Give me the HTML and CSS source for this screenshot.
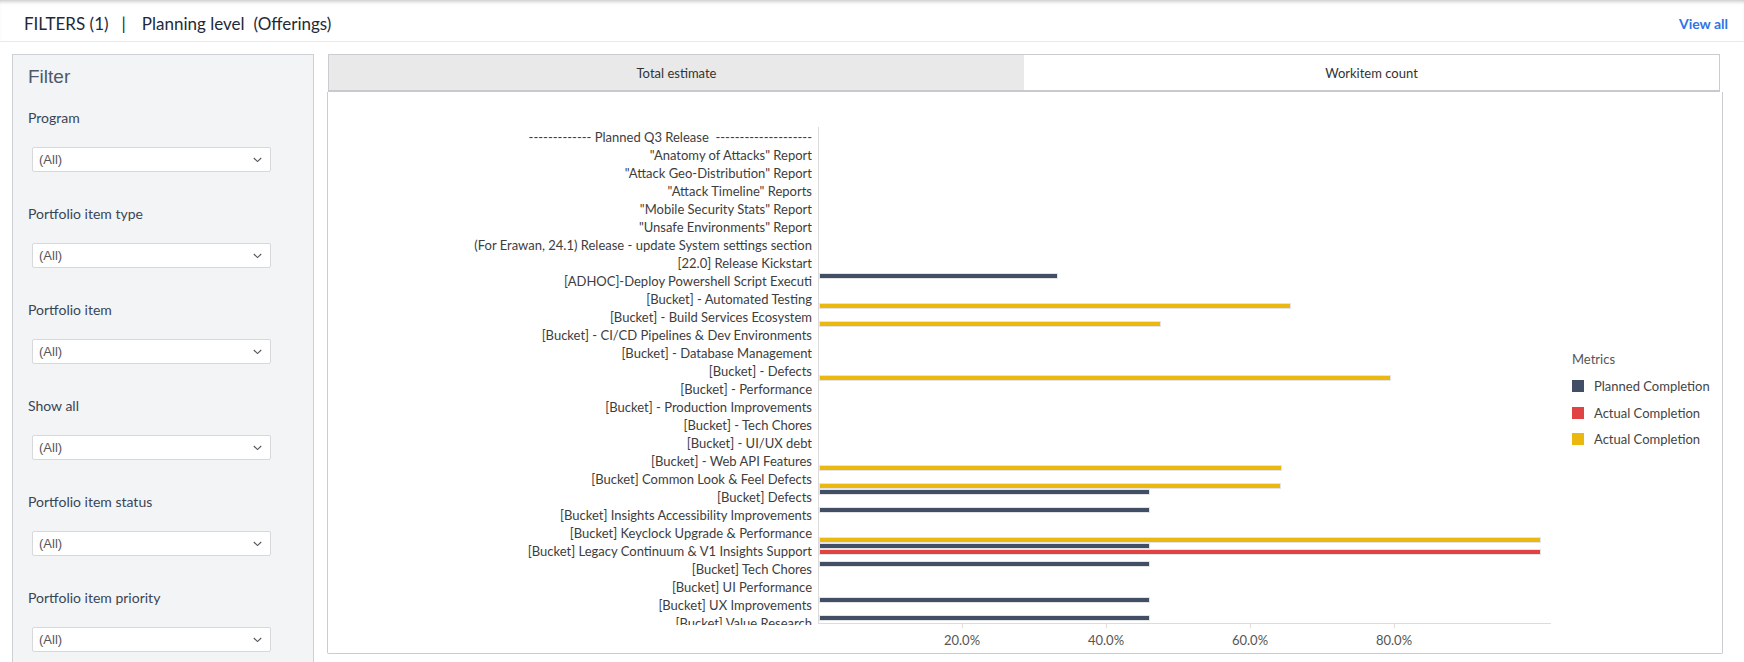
FILE: index.html
```html
<!DOCTYPE html>
<html>
<head>
<meta charset="utf-8">
<title>Filters</title>
<link rel="stylesheet" href="styles.css">
</head>
<body>
<header class="topbar">
  <div class="crumbs">
    <span class="crumb">FILTERS (1)</span>
    <span class="sep">|</span>
    <span class="crumb">Planning level</span>
    <span class="crumb crumb-sub">(Offerings)</span>
  </div>
  <a class="view-all">View all</a>
</header>
<main class="content">
  <aside class="filter-panel">
    <h2 class="filter-title">Filter</h2>
    <div class="field">
      <div class="field-label">Program</div>
      <div class="select"><span>(All)</span><svg class="chev" width="9" height="6" viewBox="0 0 9 6"><polyline points="0.8,1 4.5,4.6 8.2,1" fill="none" stroke="#555" stroke-width="1.1"/></svg></div>
    </div>
    <div class="field">
      <div class="field-label">Portfolio item type</div>
      <div class="select"><span>(All)</span><svg class="chev" width="9" height="6" viewBox="0 0 9 6"><polyline points="0.8,1 4.5,4.6 8.2,1" fill="none" stroke="#555" stroke-width="1.1"/></svg></div>
    </div>
    <div class="field">
      <div class="field-label">Portfolio item</div>
      <div class="select"><span>(All)</span><svg class="chev" width="9" height="6" viewBox="0 0 9 6"><polyline points="0.8,1 4.5,4.6 8.2,1" fill="none" stroke="#555" stroke-width="1.1"/></svg></div>
    </div>
    <div class="field">
      <div class="field-label">Show all</div>
      <div class="select"><span>(All)</span><svg class="chev" width="9" height="6" viewBox="0 0 9 6"><polyline points="0.8,1 4.5,4.6 8.2,1" fill="none" stroke="#555" stroke-width="1.1"/></svg></div>
    </div>
    <div class="field">
      <div class="field-label">Portfolio item status</div>
      <div class="select"><span>(All)</span><svg class="chev" width="9" height="6" viewBox="0 0 9 6"><polyline points="0.8,1 4.5,4.6 8.2,1" fill="none" stroke="#555" stroke-width="1.1"/></svg></div>
    </div>
    <div class="field">
      <div class="field-label">Portfolio item priority</div>
      <div class="select"><span>(All)</span><svg class="chev" width="9" height="6" viewBox="0 0 9 6"><polyline points="0.8,1 4.5,4.6 8.2,1" fill="none" stroke="#555" stroke-width="1.1"/></svg></div>
    </div>
  </aside>
  <section class="chart-col">
    <div class="tabs">
      <div class="tab active">Total estimate</div>
      <div class="tab">Workitem count</div>
    </div>
    <div class="chart-panel">
      <div class="chart">
        <div class="labels">
          <div class="lbl">------------- Planned Q3 Release &nbsp;--------------------</div>
          <div class="lbl">"Anatomy of Attacks" Report</div>
          <div class="lbl">"Attack Geo-Distribution" Report</div>
          <div class="lbl">"Attack Timeline" Reports</div>
          <div class="lbl">"Mobile Security Stats" Report</div>
          <div class="lbl">"Unsafe Environments" Report</div>
          <div class="lbl">(For Erawan, 24.1) Release - update System settings section</div>
          <div class="lbl">[22.0] Release Kickstart</div>
          <div class="lbl">[ADHOC]-Deploy Powershell Script Executi</div>
          <div class="lbl">[Bucket] - Automated Testing</div>
          <div class="lbl">[Bucket] - Build Services Ecosystem</div>
          <div class="lbl">[Bucket] - CI/CD Pipelines &amp; Dev Environments</div>
          <div class="lbl">[Bucket] - Database Management</div>
          <div class="lbl">[Bucket] - Defects</div>
          <div class="lbl">[Bucket] - Performance</div>
          <div class="lbl">[Bucket] - Production Improvements</div>
          <div class="lbl">[Bucket] - Tech Chores</div>
          <div class="lbl">[Bucket] - UI/UX debt</div>
          <div class="lbl">[Bucket] - Web API Features</div>
          <div class="lbl">[Bucket] Common Look &amp; Feel Defects</div>
          <div class="lbl">[Bucket] Defects</div>
          <div class="lbl">[Bucket] Insights Accessibility Improvements</div>
          <div class="lbl">[Bucket] Keyclock Upgrade &amp; Performance</div>
          <div class="lbl">[Bucket] Legacy Continuum &amp; V1 Insights Support</div>
          <div class="lbl">[Bucket] Tech Chores</div>
          <div class="lbl">[Bucket] UI Performance</div>
          <div class="lbl">[Bucket] UX Improvements</div>
          <div class="lbl">[Bucket] Value Research</div>
        </div>
        <div class="plot-wrap">
          <div class="plot">
            <div class="bands">
              <div class="band"><i class="slot"></i><i class="slot"></i><i class="slot"></i></div>
              <div class="band"><i class="slot"></i><i class="slot"></i><i class="slot"></i></div>
              <div class="band"><i class="slot"></i><i class="slot"></i><i class="slot"></i></div>
              <div class="band"><i class="slot"></i><i class="slot"></i><i class="slot"></i></div>
              <div class="band"><i class="slot"></i><i class="slot"></i><i class="slot"></i></div>
              <div class="band"><i class="slot"></i><i class="slot"></i><i class="slot"></i></div>
              <div class="band"><i class="slot"></i><i class="slot"></i><i class="slot"></i></div>
              <div class="band"><i class="slot"></i><i class="slot"></i><i class="slot"></i></div>
              <div class="band"><i class="slot"></i><i class="slot"><b class="bar planned" style="width:237px"></b></i><i class="slot"></i></div>
              <div class="band"><i class="slot"></i><i class="slot"></i><i class="slot"></i></div>
              <div class="band"><i class="slot"><b class="bar actual-y" style="width:470px"></b></i><i class="slot"></i><i class="slot"></i></div>
              <div class="band"><i class="slot"><b class="bar actual-y" style="width:340px"></b></i><i class="slot"></i><i class="slot"></i></div>
              <div class="band"><i class="slot"></i><i class="slot"></i><i class="slot"></i></div>
              <div class="band"><i class="slot"></i><i class="slot"></i><i class="slot"></i></div>
              <div class="band"><i class="slot"><b class="bar actual-y" style="width:570px"></b></i><i class="slot"></i><i class="slot"></i></div>
              <div class="band"><i class="slot"></i><i class="slot"></i><i class="slot"></i></div>
              <div class="band"><i class="slot"></i><i class="slot"></i><i class="slot"></i></div>
              <div class="band"><i class="slot"></i><i class="slot"></i><i class="slot"></i></div>
              <div class="band"><i class="slot"></i><i class="slot"></i><i class="slot"></i></div>
              <div class="band"><i class="slot"><b class="bar actual-y" style="width:461px"></b></i><i class="slot"></i><i class="slot"></i></div>
              <div class="band"><i class="slot"><b class="bar actual-y" style="width:460px"></b></i><i class="slot"><b class="bar planned" style="width:329px"></b></i><i class="slot"></i></div>
              <div class="band"><i class="slot"></i><i class="slot"><b class="bar planned" style="width:329px"></b></i><i class="slot"></i></div>
              <div class="band"><i class="slot"></i><i class="slot"></i><i class="slot"></i></div>
              <div class="band"><i class="slot"><b class="bar actual-y" style="width:720px"></b></i><i class="slot"><b class="bar planned" style="width:329px"></b></i><i class="slot"><b class="bar actual-r" style="width:720px"></b></i></div>
              <div class="band"><i class="slot"></i><i class="slot"><b class="bar planned" style="width:329px"></b></i><i class="slot"></i></div>
              <div class="band"><i class="slot"></i><i class="slot"></i><i class="slot"></i></div>
              <div class="band"><i class="slot"></i><i class="slot"><b class="bar planned" style="width:329px"></b></i><i class="slot"></i></div>
              <div class="band"><i class="slot"></i><i class="slot"><b class="bar planned" style="width:329px"></b></i><i class="slot"></i></div>
            </div>
          </div>
          <div class="xaxis">
            <div class="tick-cell"></div>
            <div class="tick-cell tick">20.0%</div>
            <div class="tick-cell tick">40.0%</div>
            <div class="tick-cell tick">60.0%</div>
            <div class="tick-cell tick">80.0%</div>
          </div>
        </div>
        <div class="legend">
          <div class="legend-title">Metrics</div>
          <div class="legend-item"><span class="swatch planned"></span>Planned Completion</div>
          <div class="legend-item"><span class="swatch actual-r"></span>Actual Completion</div>
          <div class="legend-item"><span class="swatch actual-y"></span>Actual Completion</div>
        </div>
      </div>
    </div>
  </section>
</main>
</body>
</html>
```

FILE: styles.css
```css
* { box-sizing: border-box; }
html, body { margin: 0; padding: 0; overflow: hidden; }
body {
  width: 1744px;
  height: 662px;
  background: #ffffff;
  font-family: Lato, "Noto Sans", sans-serif;
  color: #333333;
}

/* top bar */
.topbar {
  height: 42px;
  border-bottom: 1px solid #e8e9eb;
  display: flex;
  align-items: center;
  justify-content: space-between;
  padding: 5px 16px 0 24px;
  box-shadow: inset 0 4px 4px -3px rgba(0, 0, 0, 0.28);
}
.crumbs {
  display: flex;
  align-items: center;
  font-size: 17px;
  color: #1d2a39;
  white-space: nowrap;
}
.sep { margin: 0 16px 0 13px; }
.crumb-sub { margin-left: 9px; }
.view-all {
  font-size: 14px;
  font-weight: 700;
  color: #2f74e8;
  cursor: pointer;
}

/* main */
.content {
  display: flex;
  align-items: flex-start;
  gap: 13px;
  padding: 12px 21px 0 12px;
}

/* filter panel */
.filter-panel {
  width: 302px;
  height: 640px;
  flex: none;
  background: #f3f4f6;
  border: 1px solid #cdd1d6;
  padding: 11px 15px 0 15px;
}
.filter-title {
  margin: 0 0 20px 0;
  font-family: "Liberation Sans", Arial, sans-serif;
  font-size: 19px;
  font-weight: normal;
  line-height: 22px;
  color: #4e5a69;
}
.field { margin-bottom: 32px; }
.field-label {
  font-size: 14px;
  line-height: 20px;
  color: #3a4555;
  margin-bottom: 19px;
}
.select {
  margin-left: 4px;
  width: 239px;
  height: 25px;
  background: #ffffff;
  border: 1px solid #d6d8db;
  border-radius: 2px;
  display: flex;
  align-items: center;
  justify-content: space-between;
  padding: 0 8px 0 6px;
  font-family: "Liberation Sans", Arial, sans-serif;
  font-size: 13px;
  color: #555555;
}
.chev { display: block; }

/* chart column */
.chart-col {
  width: 1396px;
  flex: none;
}
.tabs {
  display: flex;
  height: 38px;
  margin: 0 3px 0 1px;
  border: 1px solid #c9ccd0;
  border-bottom: 2px solid #c6c9cd;
}
.tab {
  flex: 1;
  display: flex;
  align-items: center;
  justify-content: center;
  font-size: 13px;
  color: #333333;
  background: #ffffff;
}
.tab.active { background: #e9e9e9; }

.chart-panel {
  height: 562px;
  border: 1px solid #c9ccd0;
  border-top: none;
  border-radius: 0 0 2px 2px;
  padding-top: 35px;
}
.chart {
  display: flex;
  align-items: flex-start;
}
.labels {
  width: 484px;
  height: 498px;
  overflow: hidden;
  text-align: right;
  font-size: 13px;
  color: #3d3d3d;
  flex: none;
  padding-top: 0.7px;
}
.lbl {
  height: 18px;
  line-height: 18px;
  white-space: nowrap;
}

.plot-wrap {
  width: 733px;
  margin-left: 6px;
  flex: none;
}
.plot {
  height: 497px;
  border-left: 1px solid #dcdcdc;
  border-bottom: 1px solid #dcdcdc;
  overflow: hidden;
}
.bands { margin-top: -4px; }
.band {
  height: 18px;
  display: flex;
  flex-direction: column;
}
.slot {
  display: flex;
  align-items: center;
  height: 6px;
}
.bar {
  display: block;
  height: 4px;
  margin-left: 1px;
  box-shadow: 0 0 0 1px #e4e4e4;
}
.planned { background: #414e66; }
.actual-r { background: #df4343; }
.actual-y { background: #eab80e; }

.xaxis {
  display: flex;
  margin-left: -72px;
}
.tick-cell {
  width: 144px;
  flex: none;
  position: relative;
  text-align: center;
  font-size: 13px;
  line-height: 16px;
  padding-top: 8px;
  color: #555555;
}
.tick::before {
  content: "";
  position: absolute;
  left: 50%;
  top: 0;
  width: 1px;
  height: 4px;
  background: #dcdcdc;
}

/* legend */
.legend {
  margin-left: 21px;
  padding-top: 219px;
  font-size: 13px;
  color: #444444;
}
.legend-title {
  height: 26.7px;
  line-height: 26.7px;
  color: #555555;
}
.legend-item {
  display: flex;
  align-items: center;
  gap: 10px;
  height: 26.7px;
  white-space: nowrap;
}
.swatch {
  width: 12px;
  height: 12px;
  flex: none;
}
```
